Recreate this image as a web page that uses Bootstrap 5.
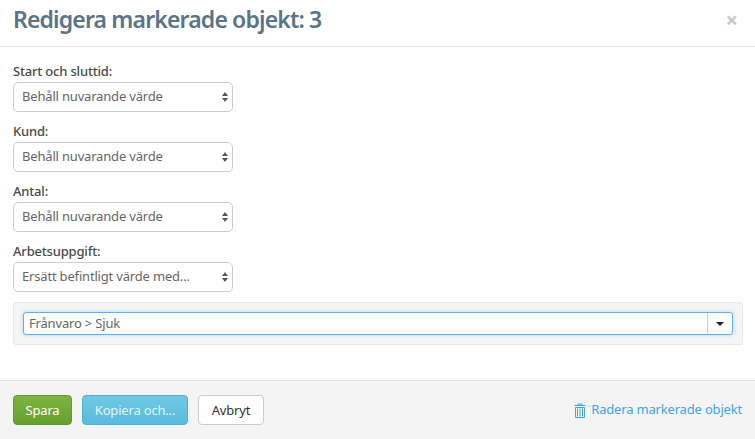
<!DOCTYPE html>
<html lang="sv">
<head>
<meta charset="utf-8">
<title>Redigera markerade objekt</title>
<link href="https://cdn.jsdelivr.net/npm/bootstrap@5.3.0/dist/css/bootstrap.min.css" rel="stylesheet">
<style>
html,body{height:439px;overflow:hidden}
body{font-family:"Noto Sans","Open Sans",sans-serif;font-size:13px;color:#666;background:#fff;letter-spacing:-.18px}
.dlg{height:439px;display:flex;flex-direction:column}
.dlg-head{height:47px;padding:0 13px 9px;border-bottom:1px solid #e9e9e9;align-items:center}
.dlg-title{font-size:23px;line-height:30px;font-weight:600;color:#5a7488;margin:0;letter-spacing:-.85px}
.dlg-x{font-size:22px;line-height:1;color:#c8c8c8;font-weight:700;margin-right:4px;background:none;border:0;padding:0}
.dlg-body{flex:1;padding:15px 13px 0}
.fld{margin-bottom:10px}
.fld-lbl{display:block;font-size:13px;line-height:18px;font-weight:500;color:#4a4a4a;margin-bottom:2px}
.sel-wrap{position:relative;width:220px;height:30px;border:1px solid #ccc;border-radius:5px;background:#fff;padding:0 8px;line-height:27px;font-size:13px;color:#666}
.sel-arrows{position:absolute;right:4px;top:8px}
.well-box{height:43px;background:#f5f5f5;border:1px solid #e7e7e7;border-radius:3px;padding:9px;margin-right:-1px}
.combo{height:23px;background:#fff;border:1px solid #5cb0ee;border-radius:3px;box-shadow:0 0 4px rgba(92,176,238,.45);align-items:stretch}
.combo-txt{flex:1;padding-left:5px;line-height:20px;font-size:13px;color:#666}
.combo-btn{width:25px;border-left:1px solid #ccc;display:flex;align-items:center;justify-content:center}
.dlg-foot{height:59px;background:#f4f4f4;border-top:1px solid #e3e3e3;padding:0 13px;align-items:center}
.act{height:30px;font-size:13px;line-height:26px;padding:0;border-radius:4px;--bs-btn-font-size:13px;letter-spacing:-.18px}
.act-save{width:59px;background:linear-gradient(#7fb441,#65a02f);border:1px solid #5f9a2c;color:#fff;margin-right:10px}
.act-copy{width:106px;background:linear-gradient(#6fc8e4,#59bbdd);border:1px solid #50b0d2;color:rgba(255,255,255,.85);margin-right:10px}
.act-cancel{width:66px;background:#fff;border:1px solid #ccc;color:#333}
.del-link{color:#3fa5e8;text-decoration:none;font-size:13px;display:flex;align-items:center;gap:5px}
</style>
</head>
<body>
<div class="dlg">
  <div class="dlg-head d-flex justify-content-between">
    <h1 class="dlg-title">Redigera markerade objekt: 3</h1>
    <button class="dlg-x" type="button" aria-label="Stäng">×</button>
  </div>
  <div class="dlg-body">
    <div class="fld"><label class="fld-lbl">Start och sluttid:</label>
      <div class="sel-wrap">Behåll nuvarande värde<svg class="sel-arrows" width="6" height="12" viewBox="0 0 6 12"><path d="M3 1 6 5H0zM3 11 0 7h6z" fill="#555"/></svg></div></div>
    <div class="fld"><label class="fld-lbl">Kund:</label>
      <div class="sel-wrap">Behåll nuvarande värde<svg class="sel-arrows" width="6" height="12" viewBox="0 0 6 12"><path d="M3 1 6 5H0zM3 11 0 7h6z" fill="#555"/></svg></div></div>
    <div class="fld"><label class="fld-lbl">Antal:</label>
      <div class="sel-wrap">Behåll nuvarande värde<svg class="sel-arrows" width="6" height="12" viewBox="0 0 6 12"><path d="M3 1 6 5H0zM3 11 0 7h6z" fill="#555"/></svg></div></div>
    <div class="fld"><label class="fld-lbl">Arbetsuppgift:</label>
      <div class="sel-wrap">Ersätt befintligt värde med...<svg class="sel-arrows" width="6" height="12" viewBox="0 0 6 12"><path d="M3 1 6 5H0zM3 11 0 7h6z" fill="#555"/></svg></div></div>
    <div class="well-box">
      <div class="combo d-flex">
        <div class="combo-txt">Frånvaro &gt; Sjuk</div>
        <div class="combo-btn"><svg width="8" height="4" viewBox="0 0 8 4"><path d="M0 0h8L4 4z" fill="#222"/></svg></div>
      </div>
    </div>
  </div>
  <div class="dlg-foot d-flex">
    <button class="btn act act-save" type="button">Spara</button>
    <button class="btn act act-copy" type="button">Kopiera och...</button>
    <button class="btn act act-cancel" type="button">Avbryt</button>
    <a class="del-link ms-auto" href="#"><svg width="12" height="15" viewBox="0 0 12 15"><path d="M4 2V1h4v1M.5 2.5h11M1.5 4.5h9v10h-9zM3.5 5.5v8M6 5.5v8M8.5 5.5v8" fill="none" stroke="#3fa5e8" stroke-width="1"/></svg>Radera markerade objekt</a>
  </div>
</div>
<script src="https://cdn.jsdelivr.net/npm/bootstrap@5.3.0/dist/js/bootstrap.bundle.min.js"></script>
</body>
</html>
